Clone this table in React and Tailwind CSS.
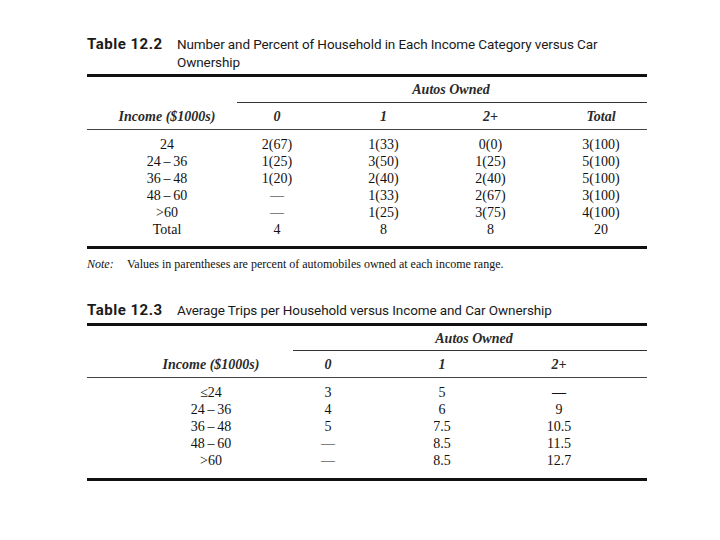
import React from "react";

const serif = { fontFamily: '"Liberation Serif", "Times New Roman", serif' };

function Title({ label, children }) {
  return (
    <div className="flex text-[#1a1a1a] leading-[18px]" style={{ fontFamily: 'Roboto, "Liberation Sans", sans-serif' }}>
      <div className="w-[90px] shrink-0 font-bold text-[15px] tracking-[0.5px]">{label}</div>
      <div className="text-[13.5px] tracking-[-0.1px]">{children}</div>
    </div>
  );
}

function Table122() {
  const rows = [
    ["24", "2(67)", "1(33)", "0(0)", "3(100)"],
    ["24\u2009\u2013\u200936", "1(25)", "3(50)", "1(25)", "5(100)"],
    ["36\u2009\u2013\u200948", "1(20)", "2(40)", "2(40)", "5(100)"],
    ["48\u2009\u2013\u200960", "\u2014", "1(33)", "2(67)", "3(100)"],
    [">60", "\u2014", "1(25)", "3(75)", "4(100)"],
    ["Total", "4", "8", "8", "20"],
  ];
  const cols = "grid grid-cols-[136px_108px_105px_109px_112px]";
  return (
    <div className="w-[560px]">
      <div className="mt-[3px] h-[3px] bg-[#111]" />
      <div className="h-[25px] flex items-center pl-[150px]" style={serif}>
        <div className="flex-1 text-center italic font-bold text-[#2a2a2a] text-[14px] pl-[18px]">Autos Owned</div>
      </div>
      <div className="ml-[150px] h-px bg-[#333]" />
      <div className={`${cols} h-[26px] items-center italic font-bold text-[#2a2a2a] text-[14px]`} style={serif}>
        <div className="text-center pl-[24px]">Income ($1000s)</div>
        <div className="text-center">0</div>
        <div className="text-center">1</div>
        <div className="text-center">2+</div>
        <div className="text-center">Total</div>
      </div>
      <div className="h-px bg-[#444]" />
      <div className="pt-[6px] text-[14px] leading-[17px]" style={serif}>
        {rows.map((r, i) => (
          <div key={i} className={cols}>
            <div className="text-center pl-[24px]">{r[0]}</div>
            <div className="text-center">{r[1]}</div>
            <div className="text-center">{r[2]}</div>
            <div className="text-center">{r[3]}</div>
            <div className="text-center">{r[4]}</div>
          </div>
        ))}
      </div>
      <div className="mt-[8px] h-[3px] bg-[#111]" />
      <div className="mt-[7px] leading-[16px] text-[12px] flex" style={serif}>
        <span className="italic w-[40px]">Note:</span>
        <span>Values in parentheses are percent of automobiles owned at each income range.</span>
      </div>
    </div>
  );
}

function Table123() {
  const rows = [
    ["\u226424", "3", "5", "\u2014"],
    ["24\u2009\u2013\u200936", "4", "6", "9"],
    ["36\u2009\u2013\u200948", "5", "7.5", "10.5"],
    ["48\u2009\u2013\u200960", "\u2014", "8.5", "11.5"],
    [">60", "\u2014", "8.5", "12.7"],
  ];
  const cols = "grid grid-cols-[184px_114px_114px_120px]";
  return (
    <div className="w-[560px]">
      <div className="mt-[4px] h-[3px] bg-[#111]" />
      <div className="h-[24px] flex items-center pl-[206px]" style={serif}>
        <div className="flex-1 text-center italic font-bold text-[#2a2a2a] text-[14px] pl-[8px]">Autos Owned</div>
      </div>
      <div className="ml-[206px] h-px bg-[#333]" />
      <div className={`${cols} h-[26px] items-center italic font-bold text-[#2a2a2a] text-[14px]`} style={serif}>
        <div className="text-center pl-[64px]">Income ($1000s)</div>
        <div className="text-center">0</div>
        <div className="text-center">1</div>
        <div className="text-center">2+</div>
      </div>
      <div className="h-px bg-[#444]" />
      <div className="pt-[6px] text-[14px] leading-[17px]" style={serif}>
        {rows.map((r, i) => (
          <div key={i} className={cols}>
            <div className="text-center pl-[64px]">{r[0]}</div>
            <div className="text-center">{r[1]}</div>
            <div className="text-center">{r[2]}</div>
            <div className={i === 0 ? "text-center font-bold" : "text-center"}>{r[3]}</div>
          </div>
        ))}
      </div>
      <div className="mt-[9px] h-[3px] bg-[#111]" />
    </div>
  );
}

export default function App() {
  return (
    <div className="w-[720px] h-[540px] bg-white text-[#111] overflow-hidden">
      <div className="pl-[87px] pt-[35px]">
        <Title label="Table 12.2">
          Number and Percent of Household in Each Income Category versus Car
          <br />
          Ownership
        </Title>
        <Table122 />
        <div className="mt-[29px]">
          <Title label="Table 12.3">
            Average Trips per Household versus Income and Car Ownership
          </Title>
        </div>
        <Table123 />
      </div>
    </div>
  );
}
